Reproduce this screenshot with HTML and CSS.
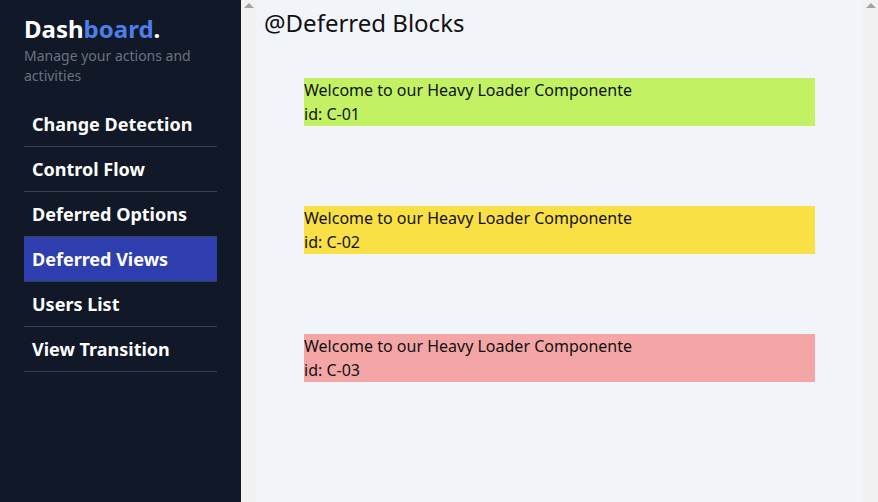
FILE: index.html
```html
<!DOCTYPE html>
<html lang="en">
<head>
<meta charset="utf-8">
<title>Dashboard</title>
<link rel="stylesheet" href="styles.css">
</head>
<body>
<div class="app">
  <aside class="sidebar">
    <h1 class="brand">Dash<span class="brand-accent">board</span>.</h1>
    <p class="tagline">Manage your actions and activities</p>
    <nav class="nav">
      <a class="nav-item">Change Detection</a>
      <a class="nav-item">Control Flow</a>
      <a class="nav-item">Deferred Options</a>
      <a class="nav-item nav-item-active">Deferred Views</a>
      <a class="nav-item">Users List</a>
      <a class="nav-item">View Transition</a>
    </nav>
  </aside>
  <div class="scrollbar"><span class="scroll-arrow"></span></div>
  <main class="main">
    <h2 class="page-title">@Deferred Blocks</h2>
    <div class="blocks">
      <div class="block block-lime">
        <div>Welcome to our Heavy Loader Componente</div>
        <div>id: C-01</div>
      </div>
      <div class="block block-yellow">
        <div>Welcome to our Heavy Loader Componente</div>
        <div>id: C-02</div>
      </div>
      <div class="block block-red">
        <div>Welcome to our Heavy Loader Componente</div>
        <div>id: C-03</div>
      </div>
    </div>
  </main>
  <div class="scrollbar"><span class="scroll-arrow"></span></div>
</div>
</body>
</html>
```
FILE: styles.css
```css
html, body {
  margin: 0;
  padding: 0;
  height: 100%;
}
body {
  font-family: "Noto Sans", "Open Sans", sans-serif;
  color: #111;
}
.app {
  display: flex;
  height: 502px;
  overflow: hidden;
}
.sidebar {
  width: 241px;
  flex-shrink: 0;
  background: #111827;
  box-sizing: border-box;
  padding: 14px 24px 0 24px;
}
.brand {
  margin: 0;
  font-size: 24px;
  font-weight: 700;
  line-height: 30px;
  color: #ffffff;
}
.brand-accent {
  color: #4b7fea;
}
.tagline {
  margin: 2px 0 0 0;
  font-size: 14px;
  line-height: 20px;
  color: #6b7280;
}
.nav {
  display: flex;
  flex-direction: column;
  margin-top: 16px;
}
.nav-item {
  display: block;
  height: 44px;
  line-height: 44px;
  padding-left: 8px;
  font-size: 18px;
  font-weight: 700;
  color: #ffffff;
  border-bottom: 1px solid #374151;
}
.nav-item-active {
  background: #2e3eaf;
}
.scrollbar {
  width: 15px;
  flex-shrink: 0;
  background: #f1f1f1;
  display: flex;
  justify-content: center;
  padding-top: 3px;
  box-sizing: border-box;
}
.scroll-arrow {
  width: 0;
  height: 0;
  border-left: 5px solid transparent;
  border-right: 5px solid transparent;
  border-bottom: 5px solid #a3a3a3;
}
.main {
  flex: 1;
  background: #f1f4f9;
  padding: 8px 8px 0 8px;
}
.page-title {
  margin: 0;
  font-size: 24px;
  font-weight: 400;
  line-height: 30px;
  color: #111;
}
.blocks {
  display: flex;
  flex-direction: column;
  gap: 80px;
  margin: 40px 40px 0 40px;
}
.block {
  font-size: 16px;
  line-height: 24px;
  color: #111;
}
.block-lime { background: #c2f263; }
.block-yellow { background: #f8e045; }
.block-red { background: #f4a6a6; }
```
